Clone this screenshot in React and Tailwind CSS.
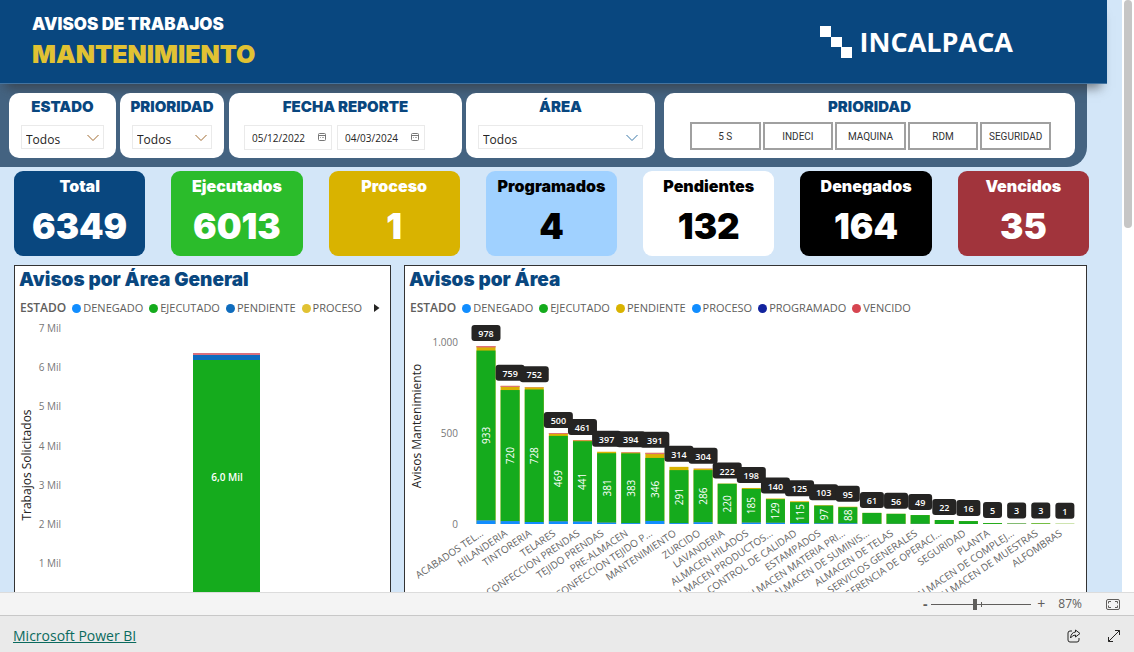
const STATS = [
  { label: "Total", value: "6349", style: "bg-[#09477f] text-white" },
  { label: "Ejecutados", value: "6013", style: "bg-[#2bbc2b] text-white" },
  { label: "Proceso", value: "1", style: "bg-[#d9b300] text-white" },
  { label: "Programados", value: "4", style: "bg-[#a0d1ff] text-black" },
  { label: "Pendientes", value: "132", style: "bg-white text-black" },
  { label: "Denegados", value: "164", style: "bg-black text-white" },
  { label: "Vencidos", value: "35", style: "bg-[#a1343c] text-white" },
];

const GENERAL_LEGEND = [
  { name: "DENEGADO", dot: "bg-[#118dff]" },
  { name: "EJECUTADO", dot: "bg-[#15ab1d]" },
  { name: "PENDIENTE", dot: "bg-[#0f6cbd]" },
  { name: "PROCESO", dot: "bg-[#e1c233]" },
];

const AREA_LEGEND = [
  { name: "DENEGADO", dot: "bg-[#118dff]" },
  { name: "EJECUTADO", dot: "bg-[#15ab1d]" },
  { name: "PENDIENTE", dot: "bg-[#d9b300]" },
  { name: "PROCESO", dot: "bg-[#118dff]" },
  { name: "PROGRAMADO", dot: "bg-[#12239e]" },
  { name: "VENCIDO", dot: "bg-[#d64550]" },
];

// denied + done + pending + overdue = total
const AREAS = [
  { name: "ACABADOS TEL…", total: 978, denied: 20, done: 933, overdue: 8 },
  { name: "HILANDERIA", total: 759, denied: 16, done: 720, overdue: 6 },
  { name: "TINTORERIA", total: 752, denied: 11, done: 728, overdue: 2 },
  { name: "TELARES", total: 500, denied: 15, done: 469, overdue: 5 },
  { name: "CONFECCION PRENDAS", total: 461, denied: 14, done: 441, overdue: 3 },
  { name: "TEJIDO PRENDAS", total: 397, denied: 8, done: 381, overdue: 0 },
  { name: "PRE-ALMACEN", total: 394, denied: 5, done: 383, overdue: 3 },
  { name: "CONFECCION TEJIDO P…", total: 391, denied: 17, done: 346, overdue: 7 },
  { name: "MANTENIMIENTO", total: 314, denied: 5, done: 291, overdue: 0 },
  { name: "ZURCIDO", total: 304, denied: 10, done: 286, overdue: 2 },
  { name: "LAVANDERIA", total: 222, denied: 1, done: 220, overdue: 0 },
  { name: "ALMACEN HILADOS", total: 198, denied: 8, done: 185, overdue: 0 },
  { name: "ALMACEN PRODUCTOS…", total: 140, denied: 7, done: 129, overdue: 0 },
  { name: "CONTROL DE CALIDAD", total: 125, denied: 5, done: 115, overdue: 0 },
  { name: "ESTAMPADOS", total: 103, denied: 4, done: 97, overdue: 0 },
  { name: "ALMACEN MATERIA PRI…", total: 95, denied: 4, done: 88, overdue: 0 },
  { name: "ALMACEN DE SUMINIS…", total: 61, denied: 1, done: 60, overdue: 0 },
  { name: "ALMACEN DE TELAS", total: 56, denied: 1, done: 55, overdue: 0 },
  { name: "SERVICIOS GENERALES", total: 49, denied: 1, done: 48, overdue: 0 },
  { name: "GERENCIA DE OPERACI…", total: 22, denied: 0, done: 22, overdue: 0 },
  { name: "SEGURIDAD", total: 16, denied: 0, done: 16, overdue: 0 },
  { name: "PLANTA", total: 5, denied: 0, done: 5, overdue: 0 },
  { name: "ALMACEN DE COMPLEJ…", total: 3, denied: 1, done: 2, overdue: 0 },
  { name: "ALMACEN DE MUESTRAS", total: 3, denied: 0, done: 3, overdue: 0 },
  { name: "ALFOMBRAS", total: 1, denied: 0, done: 1, overdue: 0 },
];

const FilterCard = ({ title, htmlFor, className, children }) => (
  <div className={`relative z-20 flex h-[65px] flex-col rounded-[10px] bg-white ${className}`}>
    <label
      htmlFor={htmlFor}
      className="pt-1 text-center font-['Inter'] text-[15px] leading-5 font-black whitespace-nowrap text-[#09477f]"
    >
      {title}
    </label>
    {children}
  </div>
);

const Dropdown = ({ id, stroke }) => (
  <div className="relative mx-3 mt-2 h-6 border border-[#eaeaea]">
    <select id={id} className="h-full w-full appearance-none bg-transparent pl-1 text-xs text-[#252423] outline-none">
      <option>Todos</option>
    </select>
    <svg className="pointer-events-none absolute top-2 right-1 h-2 w-3" viewBox="0 0 12 8" fill="none" stroke={stroke}>
      <path d="M0.5 1 L6 6.5 L11.5 1" />
    </svg>
  </div>
);

const DateBox = ({ label, value }) => (
  <div className="relative h-[25px] w-[88px] border border-[#eaeaea]">
    <input
      type="text"
      aria-label={label}
      defaultValue={value}
      className="block h-full w-full bg-transparent pl-[7px] text-[10px] text-[#252423] outline-none"
    />
    <svg className="pointer-events-none absolute top-[7px] right-[5px] h-2 w-2" viewBox="0 0 8 8" fill="none" stroke="#777">
      <rect x="0.5" y="0.5" width="7" height="7" rx="1" />
      <path d="M0.5 2.5h7" />
      <path d="M2 4.5h1M4 4.5h2" strokeOpacity="0.6" />
    </svg>
  </div>
);

const Legend = ({ items, children }) => (
  <div className="flex h-5 items-center gap-1.5 overflow-hidden pl-[5px] text-[11px] whitespace-nowrap text-[#605e5c]">
    <span className="text-xs font-semibold">ESTADO</span>
    {items.map((item) => (
      <span key={item.name} className="flex items-center gap-0.5">
        <span className={`size-[9px] rounded-full ${item.dot}`} />
        {item.name}
      </span>
    ))}
    {children}
  </div>
);

const ChartPanel = ({ title, children }) => (
  <section className="min-w-0 border border-[#333] bg-white">
    <h2 className="h-8 pl-1 font-['Inter'] text-[19px] leading-7 font-black text-[#09477f]">{title}</h2>
    {children}
  </section>
);

const GeneralChart = () => (
  <svg className="block w-full" viewBox="0 0 375 320" role="img" aria-label="Avisos por Área General">
    {[7, 6, 5, 4, 3, 2, 1].map((n, i) => (
      <text key={n} x="46" y={14 + Math.round(i * 39.2)} textAnchor="end" fontSize="10" fill="#777">
        {n} Mil
      </text>
    ))}
    <text transform="translate(16 147) rotate(-90)" textAnchor="middle" fontSize="12" fill="#252423">
      Trabajos Solicitados
    </text>
    <rect x="178" y="35" width="67" height="2" fill="#d9707c" />
    <rect x="178" y="37" width="67" height="5" fill="#0f6cbd" />
    <rect x="178" y="42" width="67" height="243" fill="#15ab1d" />
    <text x="212" y="163" textAnchor="middle" fontSize="10" fontWeight="600" fill="#fff">
      6,0 Mil
    </text>
  </svg>
);

const AreaChart = () => {
  const base = 206;
  const scale = 0.182;

  return (
    <svg className="block w-full" viewBox="0 0 681 320" role="img" aria-label="Avisos por Área">
      <text x="53" y="28" textAnchor="end" fontSize="10" fill="#777">1.000</text>
      <text x="53" y="119" textAnchor="end" fontSize="10" fill="#777">500</text>
      <text x="53" y="210" textAnchor="end" fontSize="10" fill="#777">0</text>
      <text transform="translate(16 108) rotate(-90)" textAnchor="middle" fontSize="12" fill="#252423">
        Avisos Mantenimiento
      </text>

      {AREAS.map((area, i) => {
        const center = 81 + i * 24.12;
        const x = center - 9.5;
        const top = base - area.total * scale;
        const deniedTop = base - area.denied * scale;
        const doneTop = deniedTop - area.done * scale;
        const overdue = area.overdue * scale;
        const digits = String(area.total).length;
        const boxWidth = 14 + digits * 5;

        return (
          <g key={area.name}>
            <rect x={x} y={top} width="19" height={base - top} fill="#d9b300" />
            <rect x={x} y={top} width="19" height={overdue} fill="#df7078" />
            <rect x={x} y={doneTop} width="19" height={deniedTop - doneTop} fill="#15ab1d" />
            <rect x={x} y={deniedTop} width="19" height={base - deniedTop} fill="#118dff" />
            {area.done > 80 && (
              <text
                transform={`translate(${center + 4} ${(doneTop + deniedTop) / 2}) rotate(-90)`}
                textAnchor="middle"
                fontSize="10"
                fontWeight="500"
                fill="#fff"
              >
                {area.done}
              </text>
            )}
            <text
              transform={`translate(${center - 2} 217) rotate(-34)`}
              textAnchor="end"
              fontSize="10"
              fill="#666"
            >
              {area.name}
            </text>
            <rect x={center - boxWidth / 2} y={top - 21} width={boxWidth} height="16" rx="3" fill="#252423" />
            <text x={center} y={top - 9} textAnchor="middle" fontSize="9" fontWeight="600" fill="#fff">
              {area.total}
            </text>
          </g>
        );
      })}
    </svg>
  );
};

const App = () => {
  return (
    <div className="flex h-screen flex-col overflow-hidden bg-white font-['Open_Sans','Noto_Sans',sans-serif]">
      <div className="flex min-h-0 flex-1">
        <main className="min-w-0 flex-1 overflow-hidden bg-[#d3e6f8]">
          {/* Title banner */}
          <header className="relative z-10 mr-[15px] flex h-[84px] items-center justify-between border-b border-[#4474a0] bg-[#09477f] pr-[94px] pl-8 shadow-[0_10px_10px_-6px_rgba(50,50,50,0.6)]">
            <h1 className="-mt-1 font-['Inter'] font-black">
              <span className="block text-[17px] leading-7 text-white">AVISOS DE TRABAJOS</span>
              <span className="block text-[25px] leading-8 text-[#e1c233]">MANTENIMIENTO</span>
            </h1>
            <div className="flex items-center gap-2 text-[27px] leading-8 font-bold text-white">
              <svg className="size-8" viewBox="0 0 32 32" fill="#fff">
                <path d="M0 0h11v11H0zM11 11h11v10H11zM21 21h11v11H21z" />
              </svg>
              INCALPACA
            </div>
          </header>

          {/* Filters */}
          <div className="mr-[35px] flex h-[83px] rounded-br-[20px] bg-[#446381] pt-[9px] pr-3 pl-[9px]">
            <FilterCard title="ESTADO" htmlFor="estado" className="mr-1 w-[107px]">
              <Dropdown id="estado" stroke="#a06a30" />
            </FilterCard>
            <FilterCard title="PRIORIDAD" htmlFor="prioridad" className="mr-[5px] w-[104px]">
              <Dropdown id="prioridad" stroke="#a06a30" />
            </FilterCard>
            <FilterCard title="FECHA REPORTE" className="mr-1 w-[233px]">
              <div className="mt-2 ml-[15px] flex gap-[5px]">
                <DateBox label="Desde" value="05/12/2022" />
                <DateBox label="Hasta" value="04/03/2024" />
              </div>
            </FilterCard>
            <FilterCard title="ÁREA" htmlFor="area" className="mr-[9px] w-[189px]">
              <Dropdown id="area" stroke="#3a78a8" />
            </FilterCard>
            <FilterCard title="PRIORIDAD" className="min-w-0 flex-1">
              <div className="mr-6 ml-[26px] grid grid-cols-5 gap-0.5 pt-[5px]">
                {["5 S", "INDECI", "MAQUINA", "RDM", "SEGURIDAD"].map((name) => (
                  <button
                    key={name}
                    type="button"
                    className="h-7 border-2 border-[#a0a0a0] font-['Roboto'] text-[10px] text-[#333]"
                  >
                    {name}
                  </button>
                ))}
              </div>
            </FilterCard>
          </div>

          {/* Totals */}
          <div className="mt-1 grid grid-cols-7 gap-[26px] pr-[33px] pl-[14px]">
            {STATS.map((stat) => (
              <div
                key={stat.label}
                className={`h-[85px] rounded-[9px] text-center font-['Inter'] font-black ${stat.style}`}
              >
                <div className="pt-[3px] text-base leading-6">{stat.label}</div>
                <div className="pt-1 text-[35px] leading-12">{stat.value}</div>
              </div>
            ))}
          </div>

          {/* Charts */}
          <div className="mt-[9px] grid grid-cols-[377fr_683fr] gap-[13px] pr-[35px] pl-[14px]">
            <ChartPanel title="Avisos por Área General">
              <Legend items={GENERAL_LEGEND}>
                <button type="button" aria-label="Más" className="ml-1.5">
                  <svg className="h-2 w-1.5" viewBox="0 0 6 8" fill="#252423">
                    <path d="M0 0L5.500 4L0 8z" />
                  </svg>
                </button>
              </Legend>
              <GeneralChart />
            </ChartPanel>
            <ChartPanel title="Avisos por Área">
              <Legend items={AREA_LEGEND} />
              <AreaChart />
            </ChartPanel>
          </div>
        </main>

        <div className="w-3 bg-white pl-0.5">
          <div className="h-[228px] w-2 rounded-full bg-[#c6c6c6]" />
        </div>
      </div>

      {/* Zoom controls */}
      <div className="flex h-[23px] items-center justify-end border-t border-[#dcdcdc] bg-[#f4f4f4] pr-[14px] text-[#605e5c]">
        <button type="button" aria-label="Alejar" className="w-3 text-sm leading-5 font-bold">-</button>
        <div className="relative flex h-5 w-[100px] items-center">
          <input
            type="range"
            aria-label="Zoom"
            min="0"
            max="200"
            defaultValue="87"
            className="h-px w-full appearance-none bg-[#605e5c] [&::-webkit-slider-thumb]:h-[11px] [&::-webkit-slider-thumb]:w-1 [&::-webkit-slider-thumb]:appearance-none [&::-webkit-slider-thumb]:bg-[#605e5c]"
          />
          <span className="absolute top-2 left-[50px] h-[5px] w-px bg-[#605e5c]" />
        </div>
        <button type="button" aria-label="Acercar" className="w-5 text-sm leading-5">+</button>
        <span className="mr-6 ml-[7px] text-xs">87%</span>
        <button type="button" aria-label="Ajustar a la página">
          <svg className="h-[11px] w-[14px]" viewBox="0 0 14 11" fill="none" stroke="#605e5c">
            <rect x="0.5" y="0.5" width="13" height="10" rx="1.500" />
            <path d="M5 2.500H2.500V4.500M9 2.500h2.500v2M2.500 6.500v2H5M11.500 6.500v2H9" />
          </svg>
        </button>
      </div>

      <footer className="flex h-[37px] items-center border-t border-[#c8c8c8] bg-[#eaeaea] pt-1 pr-[13px] pl-[13px]">
        <a href="#powerbi" className="mr-auto text-sm text-[#0b6a5e] underline">
          Microsoft Power BI
        </a>
        <button type="button" aria-label="Compartir" className="mr-[26px]">
          <svg className="size-[14px]" viewBox="0 0 14 14" fill="none" stroke="#252423" strokeLinejoin="round">
            <path d="M5 2H3Q1 2 1 4v7q0 2 2 2h7q2 0 2-2V9" />
            <path d="M8.500 1L13 4.500L8.500 8V6Q5.500 6 3.500 9Q4 3.500 8.500 3z" />
          </svg>
        </button>
        <button type="button" aria-label="Pantalla completa">
          <svg className="size-[14px]" viewBox="0 0 14 14" fill="none" stroke="#252423">
            <path d="M1.500 12.500L12.500 1.500M8 1.500h4.500V6M1.500 8v4.500H6" />
          </svg>
        </button>
      </footer>
    </div>
  );
};

export default App;
